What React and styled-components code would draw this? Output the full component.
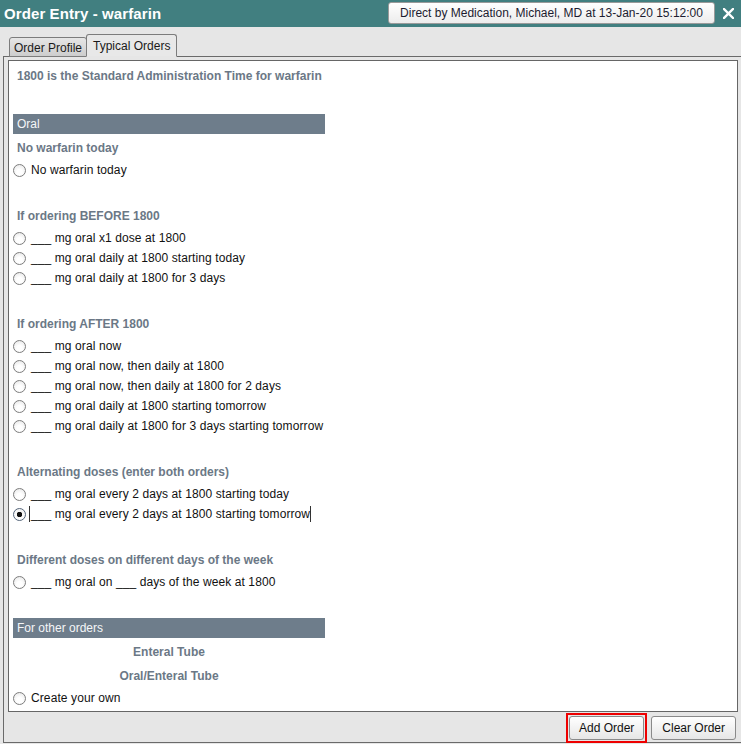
import styled, { createGlobalStyle } from "styled-components";

const GlobalStyle = createGlobalStyle`
    html, body {
        margin: 0;
        padding: 0;
        background: #e6e6e6;
        font-family: "Liberation Sans", Arial, sans-serif;
        font-size: 12px;
    }
    * { box-sizing: border-box; }
`

const groups = [
    {
        title: "No warfarin today",
        items: ["No warfarin today"],
    },
    {
        title: "If ordering BEFORE 1800",
        items: [
            "___ mg oral x1 dose at 1800",
            "___ mg oral daily at 1800 starting today",
            "___ mg oral daily at 1800 for 3 days",
        ],
    },
    {
        title: "If ordering AFTER 1800",
        items: [
            "___ mg oral now",
            "___ mg oral now, then daily at 1800",
            "___ mg oral now, then daily at 1800 for 2 days",
            "___ mg oral daily at 1800 starting tomorrow",
            "___ mg oral daily at 1800 for 3 days starting tomorrow",
        ],
    },
    {
        title: "Alternating doses (enter both orders)",
        items: [
            "___ mg oral every 2 days at 1800 starting today",
            "___ mg oral every 2 days at 1800 starting tomorrow",
        ],
        selected: 1,
    },
    {
        title: "Different doses on different days of the week",
        items: ["___ mg oral on ___ days of the week at 1800"],
    },
];

const App = () => {
    return (
        <Window>
            <GlobalStyle />
            <TitleBar>
                <Title>Order Entry - warfarin</Title>
                <ProviderButton>Direct by Medication, Michael, MD at 13-Jan-20 15:12:00</ProviderButton>
                <CloseButton>
                    <svg width="11" height="11" viewBox="0 0 11 11">
                        <path d="M1 1 L10 10 M10 1 L1 10" stroke="#fff" strokeWidth="2.4" strokeLinecap="square" />
                    </svg>
                </CloseButton>
            </TitleBar>
            <TabStrip>
                <Tab>Order Profile</Tab>
                <Tab $active>Typical Orders</Tab>
            </TabStrip>
            <Frame>
                <Panel>
                    <Intro>1800 is the Standard Administration Time for warfarin</Intro>
                    <SectionBar $top={28}>Oral</SectionBar>
                    {groups.map((g, gi) => (
                        <Group key={g.title} $first={gi === 0}>
                            <GroupTitle>{g.title}</GroupTitle>
                            {g.items.map((item, i) => (
                                <RadioRow key={item}>
                                    <Radio $checked={g.selected === i} />
                                    <RadioLabel $focused={g.selected === i}>{item}</RadioLabel>
                                </RadioRow>
                            ))}
                        </Group>
                    ))}
                    <SectionBar $top={26}>For other orders</SectionBar>
                    <CenterLabel $first>Enteral Tube</CenterLabel>
                    <CenterLabel>Oral/Enteral Tube</CenterLabel>
                    <RadioRow>
                        <Radio />
                        <RadioLabel>Create your own</RadioLabel>
                    </RadioRow>
                </Panel>
                <Footer>
                    <Highlight>
                        <FooterButton>Add Order</FooterButton>
                    </Highlight>
                    <FooterButton $wide>Clear Order</FooterButton>
                </Footer>
            </Frame>
        </Window>
    )
}

const Window = styled.div`
    width: 741px;
    height: 744px;
    overflow: hidden;
    background: #e6e6e6;
`

const TitleBar = styled.div`
    display: flex;
    align-items: center;
    height: 27px;
    padding-left: 4px;
    background: #417f80;
`

const Title = styled.div`
    flex: 1;
    color: #fff;
    font-weight: bold;
    font-size: 15px;
    letter-spacing: 0.1px;
`

const ProviderButton = styled.div`
    width: 327px;
    height: 22px;
    margin-top: -2px;
    display: flex;
    align-items: center;
    justify-content: center;
    color: #1c1c30;
    font-size: 12px;
    background: linear-gradient(#ffffff, #ececec);
    border: 1px solid #9a9a9a;
    border-radius: 3px;
`

const CloseButton = styled.div`
    width: 26px;
    display: flex;
    justify-content: center;
    align-items: center;
    padding-left: 1px;
`

const TabStrip = styled.div`
    display: flex;
    align-items: flex-end;
    height: 29px;
    padding-left: 9px;
`

const Tab = styled.div`
    height: ${p => p.$active ? 23 : 20}px;
    padding: 0 ${p => p.$active ? 6 : 4}px;
    margin-bottom: -1px;
    position: relative;
    z-index: ${p => p.$active ? 2 : 1};
    display: flex;
    align-items: center;
    color: #1a1a1a;
    font-size: 12px;
    border: 1px solid #7c7c7c;
    border-bottom: ${p => p.$active ? "1px solid #e6e6e6" : "1px solid #7c7c7c"};
    border-radius: 3px 3px 0 0;
    background: ${p => p.$active ? "#e8e8e8" : "linear-gradient(#e6e6e6, #cdcdcd)"};
    margin-left: ${p => p.$active ? -1 : 0}px;
    padding-top: ${p => p.$active ? 0 : 2}px;
`

const Frame = styled.div`
    margin-left: 3px;
    width: 745px;
    height: 687px;
    border: 1px solid #6a6a6a;
    padding: 3px 0 0 4px;
`

const Panel = styled.div`
    width: 730px;
    height: 652px;
    background: #fff;
    border: 1px solid #666;
    padding: 5px 0 0 4px;
`

const Intro = styled.div`
    height: 20px;
    line-height: 20px;
    padding-left: 4px;
    color: #6b7886;
    font-weight: bold;
`

const SectionBar = styled.div`
    width: 312px;
    height: 20px;
    line-height: 20px;
    margin-top: ${p => p.$top}px;
    padding-left: 4px;
    background: #6e7d8b;
    color: #f4f6f8;
    font-size: 12px;
`

const Group = styled.div`
    margin-top: ${p => p.$first ? 0 : 22}px;
`

const GroupTitle = styled.div`
    height: 26px;
    padding-top: 2px;
    line-height: 24px;
    padding-left: 4px;
    color: #6b7886;
    font-weight: bold;
`

const RadioRow = styled.div`
    display: flex;
    align-items: center;
    height: 20px;
`

const Radio = styled.span`
    width: 13px;
    height: 13px;
    flex: none;
    border-radius: 50%;
    border: 1px solid ${p => p.$checked ? "#55657a" : "#7d7d7d"};
    background: ${p => p.$checked
        ? "radial-gradient(circle, #111 0 2.5px, transparent 3px), linear-gradient(#f2f2f2, #ffffff)"
        : "radial-gradient(circle at 50% 65%, #ffffff 30%, #e4e4e4 100%)"};
`

const RadioLabel = styled.span`
    margin-left: ${p => p.$focused ? 3 : 4}px;
    padding-left: 1px;
    line-height: 16px;
    letter-spacing: 0.1px;
    color: #111;
    border-left: ${p => p.$focused ? "1px solid #333" : "none"};
    border-right: ${p => p.$focused ? "1px solid #333" : "none"};
`

const CenterLabel = styled.div`
    width: 312px;
    height: 24px;
    line-height: 24px;
    margin-top: ${p => p.$first ? 2 : 0}px;
    text-align: center;
    color: #6b7886;
    font-weight: bold;
`

const Footer = styled.div`
    display: flex;
    justify-content: flex-end;
    align-items: center;
    gap: 4px;
    height: 31px;
    width: 730px;
    padding-right: 2px;
`

const Highlight = styled.div`
    padding: 1px;
    border: 2px solid #ee0000;
`

const FooterButton = styled.div`
    height: 24px;
    padding: 0 ${p => p.$wide ? 10 : 9}px;
    display: flex;
    align-items: center;
    color: #111;
    font-size: 12px;
    border: 1px solid #8a8a8a;
    border-radius: 3px;
    background: linear-gradient(#ffffff, #e6e6e6);
`

export default App;
